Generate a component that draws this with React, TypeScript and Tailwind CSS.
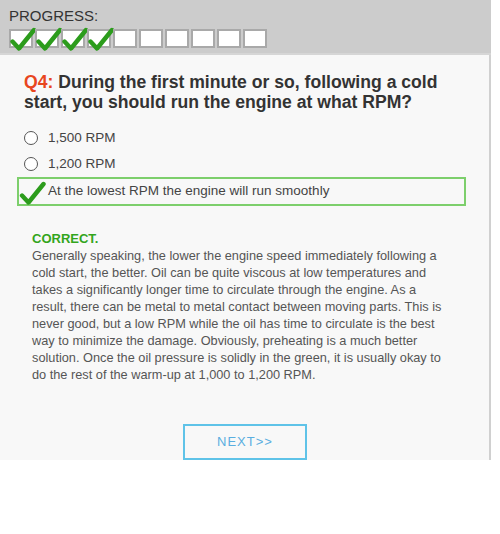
import React from "react";

const font = { fontFamily: '"Liberation Sans", Arial, sans-serif' };

function Tick({ className }: { className?: string }) {
  return (
    <svg viewBox="0 0 26 24" className={className} aria-hidden="true">
      <path d="M2.5 14.5 L9 21.5 L24 3" fill="none" stroke="#2c9c1c" strokeWidth="4.4" strokeLinecap="round" strokeLinejoin="round" />
    </svg>
  );
}

function ProgressBox({ done }: { done: boolean }) {
  return (
    <div className="relative h-[19px] w-[24px] border-2 border-[#a9a9a9] bg-white">
      {done && <Tick className="absolute left-[-1px] top-[-5px] h-[26px] w-[26px]" />}
    </div>
  );
}

function Radio({ label }: { label: string }) {
  return (
    <div className="flex h-[26px] items-center gap-[10px] pl-[24px]">
      <span className="h-[14px] w-[14px] rounded-full border-[1.5px] border-[#555] bg-white" />
      <span className="text-[13.5px] text-[#444]">{label}</span>
    </div>
  );
}

export default function App() {
  const steps = [true, true, true, true, false, false, false, false, false, false];
  return (
    <div className="w-[491px] bg-white" style={font}>
      <div className="h-[55px] border-b-2 border-[#d6d6d6] bg-[#cccccc] pl-[9px] pt-[7px]">
        <div className="text-[15px] leading-[17px] text-[#333]">PROGRESS:</div>
        <div className="mt-[5px] flex gap-[2px]">
          {steps.map((d, i) => (
            <ProgressBox key={i} done={d} />
          ))}
        </div>
      </div>
      <div className="h-[405px] border-r-2 border-[#d0d0d0] bg-[#f8f8f8]">
        <h2 className="pl-[24px] pt-[17px] text-[17.6px] font-bold leading-[20px] text-[#333]">
          <span className="text-[#e8461e]">Q4:</span> During the first minute or so, following a cold
          <br />
          start, you should run the engine at what RPM?
        </h2>
        <div className="mt-[13px]">
          <Radio label="1,500 RPM" />
          <Radio label="1,200 RPM" />
        </div>
        <div className="ml-[17px] flex h-[29px] w-[449px] items-center border-2 border-[#7dcf6c]">
          <Tick className="mt-[2px] h-[24px] w-[27px]" />
          <span className="ml-[2px] text-[13.5px] text-[#444]">At the lowest RPM the engine will run smoothly</span>
        </div>
        <div className="pl-[32px] pt-[24px]">
          <div className="text-[13px] font-bold leading-[17px] text-[#33a51c]">CORRECT.</div>
          <p className="w-[450px] text-[12.75px] leading-[17px] text-[#555]">
            Generally speaking, the lower the engine speed immediately following a<br />
            cold start, the better. Oil can be quite viscous at low temperatures and<br />
            takes a significantly longer time to circulate through the engine. As a<br />
            result, there can be metal to metal contact between moving parts. This is<br />
            never good, but a low RPM while the oil has time to circulate is the best<br />
            way to minimize the damage. Obviously, preheating is a much better<br />
            solution. Once the oil pressure is solidly in the green, it is usually okay to<br />
            do the rest of the warm-up at 1,000 to 1,200 RPM.
          </p>
        </div>
        <div className="mt-[41px] flex pl-[183px]">
          <button className="h-[36px] w-[124px] border-2 border-[#5fc3e8] text-[13px] tracking-[1px] text-[#5aaee0]">
            NEXT&gt;&gt;
          </button>
        </div>
      </div>
    </div>
  );
}
